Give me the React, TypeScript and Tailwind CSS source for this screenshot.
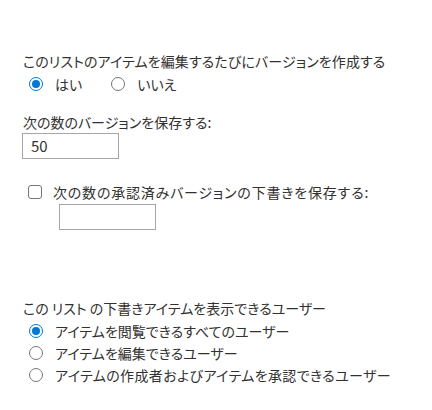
import React from "react";

const font = { fontFamily: '"Segoe UI", "Noto Sans CJK JP", "Noto Sans", sans-serif' };

function Radio({ checked }: { checked?: boolean }) {
  return checked ? (
    <span className="flex h-[14px] w-[14px] shrink-0 items-center justify-center rounded-full border-[1.5px] border-[#0078d4] bg-white">
      <span className="h-[8px] w-[8px] rounded-full bg-[#0078d4]" />
    </span>
  ) : (
    <span className="block h-[14px] w-[14px] shrink-0 rounded-full border border-[#767676] bg-white" />
  );
}

export default function App() {
  return (
    <div
      className="flex min-h-[410px] w-[432px] flex-col bg-white pl-[23px] pt-[52px] text-[14px] text-[#323130] [font-feature-settings:'palt']"
      style={font}
    >
      <div className="h-[18px] leading-[18px] tracking-[0.1px]">このリストのアイテムを編集するたびにバージョンを作成する</div>
      <div className="mt-[4px] flex h-[20px] items-center pl-[6px] leading-[20px]">
        <Radio checked />
        <span className="ml-[12px]">はい</span>
        <span className="ml-[29px] flex items-center">
          <Radio />
        </span>
        <span className="ml-[12px]">いいえ</span>
      </div>
      <div className="mt-[19px] h-[18px] leading-[18px]">次の数のバージョンを保存する:</div>
      <div className="-ml-px mt-[2px] flex h-[26px] w-[97px] items-center border border-[#a6a6a6] pl-[8px] text-[15px]">
        50
      </div>
      <div className="mt-[24px] flex h-[18px] items-center leading-[18px]">
        <span className="ml-[5px] h-[14px] w-[14px] shrink-0 rounded-[3px] border border-[#767676]" />
        <span className="ml-[11px] tracking-[0.8px]">次の数の承認済みバージョンの下書きを保存する:</span>
      </div>
      <div className="ml-[36px] mt-[3px] h-[26px] w-[97px] border border-[#a6a6a6]" />
      <div className="mt-[69px] h-[18px] leading-[18px]">この リスト の下書きアイテムを表示できるユーザー</div>
      <div className="mt-[3px] flex flex-col">
        {[
          ["アイテムを閲覧できるすべてのユーザー", true, ""],
          ["アイテムを編集できるユーザー", false, ""],
          ["アイテムの作成者およびアイテムを承認できるユーザー", false, "tracking-[0.36px]"],
        ].map(([label, checked, tr]) => (
          <div key={label as string} className="flex h-[22px] items-center pl-[6px]">
            <Radio checked={checked as boolean} />
            <span className={"ml-[12px] " + (tr as string)}>{label as string}</span>
          </div>
        ))}
      </div>
    </div>
  );
}
